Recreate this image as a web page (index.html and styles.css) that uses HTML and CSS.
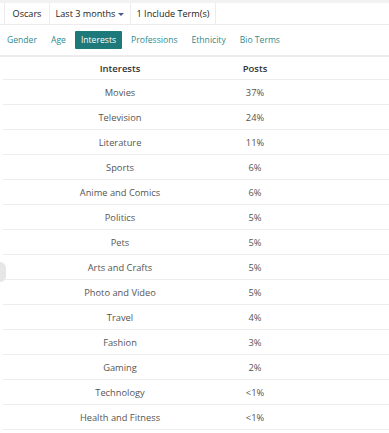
FILE: index.html
```html
<!DOCTYPE html>
<html>
<head>
<meta charset="utf-8">
<link rel="stylesheet" href="styles.css">
</head>
<body>
<div class="page">
  <div class="filters">
    <div class="cell">Oscars</div>
    <div class="cell">Last 3 months <span class="caret"></span></div>
    <div class="cell">1 Include Term(s)</div>
  </div>
  <div class="tabs">
    <span class="tab">Gender</span>
    <span class="tab">Age</span>
    <span class="tab active">Interests</span>
    <span class="tab">Professions</span>
    <span class="tab">Ethnicity</span>
    <span class="tab">Bio Terms</span>
  </div>
  <div class="table">
    <div class="row head"><span>Interests</span><span>Posts</span><span></span></div>
    <div class="row"><span>Movies</span><span>37%</span><span></span></div>
    <div class="row"><span>Television</span><span>24%</span><span></span></div>
    <div class="row"><span>Literature</span><span>11%</span><span></span></div>
    <div class="row"><span>Sports</span><span>6%</span><span></span></div>
    <div class="row"><span>Anime and Comics</span><span>6%</span><span></span></div>
    <div class="row"><span>Politics</span><span>5%</span><span></span></div>
    <div class="row"><span>Pets</span><span>5%</span><span></span></div>
    <div class="row"><span>Arts and Crafts</span><span>5%</span><span></span></div>
    <div class="row"><span>Photo and Video</span><span>5%</span><span></span></div>
    <div class="row"><span>Travel</span><span>4%</span><span></span></div>
    <div class="row"><span>Fashion</span><span>3%</span><span></span></div>
    <div class="row"><span>Gaming</span><span>2%</span><span></span></div>
    <div class="row"><span>Technology</span><span>&lt;1%</span><span></span></div>
    <div class="row"><span>Health and Fitness</span><span>&lt;1%</span><span></span></div>
  </div>
  <div class="scroll-knob"></div>
</div>
</body>
</html>
```
FILE: styles.css
```css
* { box-sizing: border-box; }
html, body { margin: 0; padding: 0; background: #fff; }
body {
  font-family: "Open Sans", "Noto Sans", sans-serif;
  font-size: 9.3px;
  color: #444;
  overflow: hidden;
}
.page {
  position: relative;
  width: 389px;
  height: 433px;
  border-top: 3px solid #f2f2f2;
}
.filters {
  display: flex;
  height: 22px;
  padding-left: 4px;
  border-bottom: 1px solid #ececec;
}
.cell {
  display: flex;
  align-items: center;
  justify-content: center;
  border-left: 1px solid #ececec;
  color: #222;
  font-size: 9.1px;
  white-space: nowrap;
}
.cell:nth-child(1) { width: 45px; }
.cell:nth-child(2) { width: 81px; }
.cell:nth-child(3) { width: 86px; border-right: 1px solid #ececec; }
.caret {
  display: inline-block;
  margin-left: 3px;
  margin-top: 2px;
  width: 0; height: 0;
  border-left: 3px solid transparent;
  border-right: 3px solid transparent;
  border-top: 3px solid #4a5a8a;
}
.tabs {
  display: flex;
  align-items: center;
  height: 32px;
  padding: 0 0 0 2px;
  border-bottom: 2px solid #ececec;
}
.tab {
  padding: 4px 5px 4px;
  margin-right: 4px;
  color: #2f8a8d;
  font-size: 8.6px;
  line-height: 10px;
  border-radius: 1px;
}
.tab.active {
  background: #1e7a7a;
  color: #fff;
  padding: 4px 6px;
}
.table { padding-left: 3px; }
.row {
  display: grid;
  grid-template-columns: 234px 36px 1fr;
  height: 25px;
  align-items: center;
  border-bottom: 1px solid #ededed;
  color: #555;
  font-size: 9.3px;
  text-align: center;
  white-space: nowrap;
}
.row span { display: block; }
.row.head {
  height: 23px;
  color: #333;
  font-weight: 600;
  font-size: 9.5px;
}
.scroll-knob {
  position: absolute;
  left: -6px;
  top: 259px;
  width: 12px;
  height: 20px;
  border-radius: 6px;
  background: #e6e6e6;
}
```
